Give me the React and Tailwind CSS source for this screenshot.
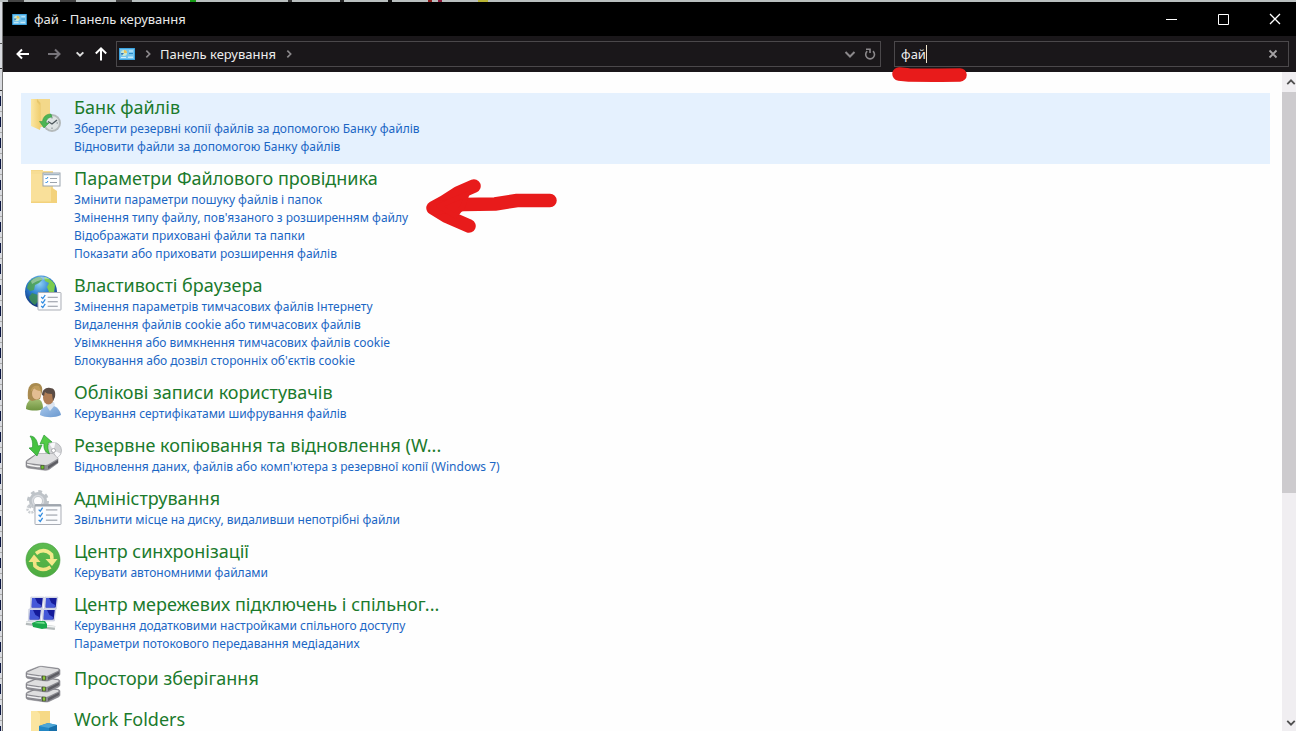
import { useId } from 'react';

function ControlPanelIcon({ className }) {
  return (
    <svg viewBox="0 0 16 12" className={className} aria-hidden="true">
      <rect width="16" height="12" fill="#2f9bdc" />
      <rect x="0.8" y="0.8" width="14.4" height="10.4" fill="#74c4ee" />
      <circle cx="5" cy="5" r="3" fill="#c9e8d0" />
      <path d="M5 5V2a3 3 0 0 1 3 3z" fill="#e8c35c" />
      <path d="M5 5H2a3 3 0 0 0 1 2.200z" fill="#2d72b8" />
      <rect x="10" y="2.500" width="4" height="1" fill="#d3effc" />
      <rect x="10" y="5" width="4" height="1" fill="#2e8ac8" />
      <rect x="2" y="9" width="5" height="1" fill="#d3effc" />
      <rect x="9" y="8.500" width="5" height="1.500" fill="#c4e8f8" />
    </svg>
  );
}

function IconFrame({ children }) {
  return (
    <svg viewBox="0 0 36 36" className="size-9 shrink-0 overflow-visible" aria-hidden="true">
      {children}
    </svg>
  );
}

function Checklist({ x, y, w, h, lines = 3 }) {
  const rows = Array.from({ length: lines }, (_, i) => y + (h * (i + 1)) / (lines + 0.9));
  return (
    <g>
      <rect x={x} y={y} width={w} height={h} fill="#fbfcfe" stroke="#a9adb5" strokeWidth="1" rx="0.6" />
      {rows.map((r) => (
        <g key={r}>
          <path d={`M${x + w * 0.14} ${r}l1.600 1.600 2.400-3.600`} fill="none" stroke="#2f8be0" strokeWidth="1.300" />
          <path d={`M${x + w * 0.42} ${r + 0.3}h${w * 0.44}`} stroke="#8e949e" strokeWidth="1" />
        </g>
      ))}
    </g>
  );
}

function FileHistoryIcon() {
  const id = useId();
  return (
    <IconFrame>
      <defs>
        <linearGradient id={id} x1="0" x2="1">
          <stop offset="0" stopColor="#fbe7a4" />
          <stop offset="1" stopColor="#f1cf70" />
        </linearGradient>
      </defs>
      <path d="M12 2h13v22l-3 6H12z" fill="#f3d88a" />
      <path d="M6 2h6l3 4v27L6 29z" fill={`url(#${id})`} />
      <path d="M12 2v3l3 3v24l0.500-1V6z" fill="#e8c66a" />
      <circle cx="27" cy="26" r="9" fill="#b4babb" />
      <circle cx="27" cy="26" r="7" fill="#dde3e3" />
      <path d="M27 20v1.500M27 30.500V32M21 26h1.500M31.500 26H33" stroke="#7c8588" strokeWidth="1" />
      <path d="M23 24.500l4 2.500 5-4" fill="none" stroke="#4d575b" strokeWidth="1.400" />
      <path d="M26 17c-5 0-8 3-8.500 7.500h-3L19 31l5-5h-3c0-3 2-5.500 6-6z" fill="#4cb455" stroke="#2f9540" strokeWidth="0.500" />
    </IconFrame>
  );
}

function ExplorerOptionsIcon() {
  return (
    <IconFrame>
      <path d="M6 2h12v4H6z" fill="#f4d788" />
      <path d="M6 3h22v19H6z" fill="#f7dd94" />
      <path d="M6 6h20v29H6z" fill="#f9e09a" />
      <path d="M26 19l6 4v12H6v-1.500h20z" fill="#f3d27c" />
      <rect x="18" y="5" width="17" height="13" fill="#fff" stroke="#9aa4ae" />
      <path d="M18.500 6.500h16" stroke="#9fb2c2" strokeWidth="1.500" />
      <path d="M20.500 10l1 1 1.500-2M20.500 14l1 1 1.500-2" fill="none" stroke="#2f8be0" strokeWidth="1" />
      <path d="M25 10.500h7M25 14.500h7" stroke="#9ba3ac" strokeWidth="1" />
    </IconFrame>
  );
}

function InternetIcon() {
  const id = useId();
  return (
    <IconFrame>
      <defs>
        <radialGradient id={id} cx="0.45" cy="0.25" r="0.8">
          <stop offset="0" stopColor="#8fd2f5" />
          <stop offset="0.45" stopColor="#2b7ed0" />
          <stop offset="1" stopColor="#0b2468" />
        </radialGradient>
      </defs>
      <circle cx="16" cy="16.500" r="16" fill={`url(#${id})`} />
      <path d="M3 9c3-5 7-7 12-7l3 2-4 4-4 2-1 5-4 1-3-3z" fill="#4fa24c" opacity="0.850" />
      <path d="M19 2c5 1 9 4 11 8l-1 8-5-1-2-5 2-4-4-2z" fill="#7ccc4e" />
      <path d="M7 18l6 2 1 5-4 5c-4-2-6-6-6-8z" fill="#3f8f52" opacity="0.850" />
      <path d="M6 6c5-5 13-6 19-2-6 0-12 1-18 5z" fill="#fff" opacity="0.350" />
      <Checklist x={13} y={17.5} w={23} h={17.5} />
    </IconFrame>
  );
}

function UsersIcon() {
  const id = useId();
  return (
    <IconFrame>
      <defs>
        <linearGradient id={`${id}g`} x1="0" y1="0" x2="0" y2="1">
          <stop offset="0" stopColor="#a9c277" />
          <stop offset="1" stopColor="#6f9440" />
        </linearGradient>
        <linearGradient id={`${id}b`} x1="0" y1="0" x2="1" y2="1">
          <stop offset="0" stopColor="#a9c9ec" />
          <stop offset="1" stopColor="#6a98cf" />
        </linearGradient>
      </defs>
      <path d="M1 27c0-6 3-10 9-11 6 1 8 4 8 11-5 2-12 2-17 0z" fill={`url(#${id}g)`} />
      <path d="M3 17C2 7 4 1 11 1c5 0 7 4 6 9l-2 7-8 2z" fill="#a98b50" />
      <ellipse cx="11.500" cy="11.500" rx="4.500" ry="6" fill="#e3bd92" />
      <path d="M6 9c0-4 4-6 8-5l2 5c-4 0-6-2-7-3-1 2-2 3-3 3z" fill="#bf9c5c" />
      <path d="M15 33c0-6 4-9 10-10 7 1 10 5 11 10-6 3-15 3-21 0z" fill={`url(#${id}b)`} />
      <path d="M21 23l4 6 5-6-1-3h-7z" fill="#dbe4f0" />
      <ellipse cx="23.500" cy="15.500" rx="5.500" ry="7" fill="#b07d55" />
      <path d="M17 13c0-5 4-8 8-7 4 0 6 3 5 9l-2 4-1-7c-4 0-6-1-7-2l-1 4z" fill="#5b4c45" />
    </IconFrame>
  );
}

function DriveShape({ y }) {
  return (
    <g>
      <path d={`M1 ${y + 7}q0-1.500 2-2.300L13 ${y + 0.8}q2-.8 4-.5l16 2q2 .4 2 2v3.700q0 1.200-1.500 2L24 ${y + 14.5}q-1.500.8-3.500.5L3 ${y + 12.5}q-2-.4-2-2z`} fill="#8b8b91" stroke="#77777c" strokeWidth="0.500" />
      <path d={`M2 ${y + 6.5}L14 ${y + 1.2}q1.500-.5 3-.3l16 2.300q1.500.6 0 1.500L23 ${y + 9.6}q-1.500.6-3 .3L3 ${y + 7.5}q-1.500-.3-1-1z`} fill="#dededf" />
      <path d={`M2 ${y + 9.3}q9 1.800 14 1.800`} fill="none" stroke="#f0f0f2" strokeWidth="1.600" />
      <path d={`M23 ${y + 11}L34 ${y + 5.5}v2.500l-11 6z`} fill="#5d5d63" />
      <rect x="17.500" y={y + 10} width="3" height="4" fill="#8dc63a" stroke="#33401f" strokeWidth="0.600" />
    </g>
  );
}

function BackupIcon() {
  return (
    <IconFrame>
      <circle cx="28.500" cy="15.500" r="8" fill="#d3d4d7" stroke="#a4a6aa" strokeWidth="0.700" />
      <path d="M28.500 15.500l-4-6.500a8 8 0 0 1 6-1.500zM28.500 15.500l7 3a8 8 0 0 1-4 4.500z" fill="#f8f8fa" />
      <circle cx="28.500" cy="15.500" r="2" fill="#fff" stroke="#8f9195" strokeWidth="0.700" />
      <path d="M1 27q0-1.500 2-2.500l9-6h16l5 5v4.500L24 34.500q-2 1-4 .8L3 33q-2-.4-2-2z" fill="#8d8d92" stroke="#77777c" strokeWidth="0.500" />
      <path d="M2 26.500L13 18.500h15l5 5-10 6q-1.500.6-3 .4L3 28q-1.500-.4-1-1.500z" fill="#dfdfe1" />
      <path d="M2 29.500q8 2 13 2" fill="none" stroke="#f3f3f3" strokeWidth="1.500" />
      <path d="M23 31l10-6v2.500L23 34z" fill="#5d5d63" />
      <rect x="16" y="30.500" width="3" height="3.500" fill="#6fc02e" stroke="#33401f" strokeWidth="0.500" />
      <path d="M5 1c4 0 7 3 8 10l4-1-5 11-8-8 3.500-.5C8 7 7 4 5 1z" fill="#45c240" stroke="#1f8f2c" strokeWidth="0.600" />
      <path d="M19 0l8 7-3.500.5c-1 4-1 7 1 11.500-5-2-6-6-5.500-10.500L15 9z" fill="#52cb46" stroke="#1f8f2c" strokeWidth="0.600" />
    </IconFrame>
  );
}

function AdminIcon() {
  return (
    <IconFrame>
      <circle cx="13" cy="13" r="6.500" fill="none" stroke="#bec3c8" strokeWidth="5" />
      <circle cx="13" cy="13" r="9.500" fill="none" stroke="#bec3c8" strokeWidth="3" strokeDasharray="3.700 3.760" />
      <circle cx="13" cy="13" r="5.500" fill="none" stroke="#d7dade" strokeWidth="1.500" />
      <circle cx="6" cy="21" r="3.500" fill="none" stroke="#cbcfd3" strokeWidth="2.500" strokeDasharray="2 1" />
      <Checklist x={10} y={16.5} w={26} h={20} />
      <path d="M10 17.500h26" stroke="#9fa6ae" strokeWidth="2" />
    </IconFrame>
  );
}

function SyncIcon() {
  const id = useId();
  return (
    <IconFrame>
      <defs>
        <linearGradient id={id} x1="0" y1="0" x2="0" y2="1">
          <stop offset="0" stopColor="#5dbb50" />
          <stop offset="1" stopColor="#4dab40" />
        </linearGradient>
      </defs>
      <circle cx="18" cy="19" r="17" fill={`url(#${id})`} stroke="#3f9b37" strokeWidth="0.600" />
      <path d="M11 12.500Q19 6.500 26.500 13.500L27 18" fill="none" stroke="#f3ea8c" strokeWidth="3.600" />
      <path d="M20.500 18h12L27 25z" fill="#f3ea8c" />
      <path d="M25.500 26Q17 31.500 10 25L9.500 20" fill="none" stroke="#f3e384" strokeWidth="3.600" />
      <path d="M3.500 21h12L9 13.500z" fill="#f3e384" />
    </IconFrame>
  );
}

function Monitor({ x, y }) {
  return (
    <g>
      <path d={`M${x + 0.8} ${y}h13l-1.500 12h-12z`} fill="#dde1ee" stroke="#b4bbd2" strokeWidth="0.500" />
      <path d={`M${x + 2} ${y + 1}h10.800l-1.200 9.500h-10z`} fill="#151b9a" />
      <path d={`M${x + 2} ${y + 1}h3l2.500 5 3.500 2-0.300 2.500h-9z`} fill="#4458d8" />
    </g>
  );
}

function NetworkIcon() {
  return (
    <IconFrame>
      <Monitor x={5} y={3} />
      <Monitor x={19} y={3} />
      <Monitor x={3} y={15} />
      <Monitor x={17} y={15} />
      <path d="M1 29l8 1 12 3 9 1" fill="none" stroke="#b4babb" strokeWidth="4" />
      <path d="M1 28l8 1 12 3 9 1" fill="none" stroke="#eff2f2" strokeWidth="1.500" />
      <path d="M7 29l5-2h8l2 3v4l-5 1-9-2z" fill="#19a84b" />
      <path d="M9 29l4-1h6l1 2z" fill="#6fdc8c" />
    </IconFrame>
  );
}

function StorageIcon() {
  return (
    <IconFrame>
      <DriveShape y={22} />
      <DriveShape y={12} />
      <DriveShape y={1} />
    </IconFrame>
  );
}

function WorkFoldersIcon() {
  return (
    <IconFrame>
      <path d="M6 5h19v31H6z" fill="#f6d986" />
      <path d="M6 5h6l3 3v28H6z" fill="#fbe5a0" />
      <path d="M14 20l9-3 9 2v17H14z" fill="#2387c4" />
      <path d="M14 20l9-3 9 2-8 3z" fill="#4da6d6" />
      <path d="M24 22l8-3v17h-8z" fill="#176fa9" />
    </IconFrame>
  );
}

const items = [
  {
    title: 'Банк файлів',
    Icon: FileHistoryIcon,
    active: true,
    links: ['Зберегти резервні копії файлів за допомогою Банку файлів', 'Відновити файли за допомогою Банку файлів'],
  },
  {
    title: 'Параметри Файлового провідника',
    Icon: ExplorerOptionsIcon,
    links: [
      'Змінити параметри пошуку файлів і папок',
      "Змінення типу файлу, пов'язаного з розширенням файлу",
      'Відображати приховані файли та папки',
      'Показати або приховати розширення файлів',
    ],
  },
  {
    title: 'Властивості браузера',
    Icon: InternetIcon,
    links: [
      'Змінення параметрів тимчасових файлів Інтернету',
      'Видалення файлів cookie або тимчасових файлів',
      'Увімкнення або вимкнення тимчасових файлів cookie',
      "Блокування або дозвіл сторонніх об'єктів cookie",
    ],
  },
  { title: 'Облікові записи користувачів', Icon: UsersIcon, links: ['Керування сертифікатами шифрування файлів'] },
  {
    title: 'Резервне копіювання та відновлення (W...',
    Icon: BackupIcon,
    links: ["Відновлення даних, файлів або комп'ютера з резервної копії (Windows 7)"],
  },
  { title: 'Адміністрування', Icon: AdminIcon, links: ['Звільнити місце на диску, видаливши непотрібні файли'] },
  { title: 'Центр синхронізації', Icon: SyncIcon, links: ['Керувати автономними файлами'] },
  {
    title: 'Центр мережевих підключень і спільног...',
    Icon: NetworkIcon,
    links: ['Керування додатковими настройками спільного доступу', 'Параметри потокового передавання медіаданих'],
  },
  { title: 'Простори зберігання', Icon: StorageIcon, links: [] },
  { title: 'Work Folders', Icon: WorkFoldersIcon, links: [] },
];

function ResultItem({ title, Icon, links, active }) {
  return (
    <li className={`flex gap-[13px] px-1 ${active ? 'bg-[#e5f1fe]' : ''}`}>
      <div className="pt-1 pb-px">
        <Icon />
      </div>
      <div className={links.length ? 'min-w-0 pt-0.5 pb-2' : 'min-w-0 pt-[5px]'}>
        <h2 className="text-[18px] leading-6 whitespace-nowrap text-[#1b7a2c]">
          <a href="#open">{title}</a>
        </h2>
        {links.length > 0 && (
          <ul className="pt-px">
            {links.map((l) => (
              <li key={l} className="text-[12px] leading-[18px] whitespace-nowrap text-[#1b66c4]">
                <a href="#task">{l}</a>
              </li>
            ))}
          </ul>
        )}
      </div>
    </li>
  );
}

function Chevron({ d, className, width = 1.6 }) {
  return (
    <svg viewBox="0 0 12 12" className={className} fill="none" stroke="currentColor" strokeWidth={width} aria-hidden="true">
      <path d={d} />
    </svg>
  );
}

function BackgroundTop() {
  return (
    <div className="flex h-0.5 shrink-0 bg-[#b9bfbf]" aria-hidden="true">
      <div className="ml-2 w-4 bg-[#444]" />
      <div className="ml-9 w-4 bg-[#444]" />
      <div className="ml-10 w-4 bg-[#444]" />
      <div className="ml-[58px] w-1.5 bg-[#149a14]" />
      <div className="ml-[92px] w-1 bg-[#333]" />
      <div className="ml-12 w-1 bg-[#222]" />
      <div className="ml-11 w-1 bg-[#111]" />
      <div className="ml-9 w-1 bg-[#8b1a1a]" />
      <div className="ml-1.5 w-1 bg-[#8b1a3a]" />
      <div className="ml-9 w-2.5 bg-[#b9b433]" />
    </div>
  );
}

function BackgroundLeft() {
  return (
    <div className="flex w-[3px] shrink-0 flex-col overflow-hidden border-r border-[#777] bg-[#d9dbe0]" aria-hidden="true">
      <div className="h-[42px] shrink-0 border-b border-[#555]" />
      <div className="h-[25px] shrink-0 border-b border-[#333]" />
      <div className="h-[22px] shrink-0 border-b border-[#333]" />
      {Array.from({ length: 32 }, (_, i) => (
        <div key={i} className="flex h-[21px] shrink-0 items-center border-b border-[#aaa]">
          <div className="h-2.5 w-px bg-[#0a1440]" />
        </div>
      ))}
    </div>
  );
}

export default function App() {
  return (
    <div className="relative flex h-screen flex-col overflow-hidden bg-[#b9bfbf] font-['Noto_Sans','Open_Sans',sans-serif]">
      <BackgroundTop />
      <div className="flex min-h-0 flex-1">
        <BackgroundLeft />
        <div className="flex min-w-0 flex-1 flex-col bg-[#fefefe]">
          <header className="flex h-[34px] shrink-0 items-center bg-black pl-[9px] text-[#e8e8e8]">
            <ControlPanelIcon className="h-[11px] w-[15px]" />
            <h1 className="ml-[7px] text-[13px] leading-5">фай - Панель керування</h1>
            <div className="ml-auto flex">
              <button aria-label="Згорнути" className="flex h-8 w-[52px] items-center justify-center">
                <svg viewBox="0 0 11 11" className="size-[11px]" stroke="#fff" aria-hidden="true"><path d="M0 5.500h11" /></svg>
              </button>
              <button aria-label="Розгорнути" className="flex h-8 w-[52px] items-center justify-center">
                <svg viewBox="0 0 11 11" className="size-[11px]" fill="none" stroke="#fff" aria-hidden="true"><path d="M.5.500h10v10H.5z" /></svg>
              </button>
              <button aria-label="Закрити" className="flex h-8 w-[47px] items-center justify-center pl-1">
                <svg viewBox="0 0 12 12" className="size-3" stroke="#fff" strokeWidth="1.300" aria-hidden="true"><path d="M1 1l10 10M11 1L1 11" /></svg>
              </button>
            </div>
          </header>

          <nav className="flex h-9 shrink-0 items-center bg-[#1a171a] pr-[7px] pl-3 text-[#ededed]">
            <button aria-label="Назад" className="text-white">
              <svg viewBox="0 0 16 16" className="size-4" fill="none" stroke="currentColor" strokeWidth="2" aria-hidden="true"><path d="M14 8H2.500M7 3.500L2.500 8 7 12.500" /></svg>
            </button>
            <button aria-label="Уперед" className="ml-[15px] text-[#77747a]">
              <svg viewBox="0 0 16 16" className="size-4" fill="none" stroke="currentColor" strokeWidth="2" aria-hidden="true"><path d="M2 8h11.500M9 3.500L13.500 8 9 12.500" /></svg>
            </button>
            <button aria-label="Останні розташування" className="ml-[13px] text-[#dcdcdc]">
              <Chevron className="size-2.5" d="M2 4l4 4 4-4" width={2.4} />
            </button>
            <button aria-label="Угору" className="ml-2 text-white">
              <svg viewBox="0 0 16 16" className="size-4" fill="none" stroke="currentColor" strokeWidth="2" aria-hidden="true"><path d="M8 14.500V2.500M2.800 7.500L8 2.300l5.200 5.200" /></svg>
            </button>

            <div className="ml-[7px] flex h-[26px] min-w-0 flex-[769] items-center border border-[#4b484b] pl-0.5">
              <ControlPanelIcon className="h-3 w-4" />
              <Chevron className="ml-2 size-2.5 text-[#8b888b]" d="M4 2l4 4-4 4" width={2} />
              <a href="#control-panel" className="ml-[7px] text-[13px] leading-5">Панель керування</a>
              <Chevron className="ml-2 size-2.5 text-[#8b888b]" d="M4 2l4 4-4 4" width={2} />
              <button aria-label="Попередні розташування" className="ml-auto text-[#8b888b]">
                <Chevron className="size-3" d="M1.500 4L6 8.500 10.500 4" width={2} />
              </button>
              <button aria-label="Оновити" className="mr-1 ml-2 text-[#8b888b]">
                <svg viewBox="0 0 12 12" className="size-3" fill="none" stroke="currentColor" strokeWidth="1.600" aria-hidden="true">
                  <path d="M9 3.200A4.400 4.400 0 1 1 3.200 3.200" />
                  <path d="M2 1.300h4V5" />
                </svg>
              </button>
            </div>

            <div className="ml-[13px] flex h-[26px] min-w-0 flex-[391] items-center border border-[#4b484b] pl-[6px]">
              <input
                type="text"
                aria-label="Пошук"
                defaultValue="фай"
                className="field-sizing-content bg-transparent p-0 text-[13px] leading-5 caret-transparent outline-none"
              />
              <span className="h-[18px] w-px bg-[#f0e6d0]" />
              <button aria-label="Очистити пошук" className="mr-2.5 ml-auto text-[#a5a2a5]">
                <svg viewBox="0 0 10 10" className="size-2.5" stroke="currentColor" strokeWidth="1.800" aria-hidden="true"><path d="M1.500 1.500l7 7M8.500 1.500l-7 7" /></svg>
              </button>
            </div>
          </nav>

          <div className="flex min-h-0 flex-1">
            <main className="min-w-0 flex-1 overflow-hidden pt-[21px] pr-3 pl-[18px]">
              <ul>
                {items.map((item) => (
                  <ResultItem key={item.title} {...item} />
                ))}
              </ul>
            </main>
            <div className="flex w-3.5 shrink-0 flex-col bg-[#f0eef1] text-[#505050]">
              <button aria-label="Прокрутити вгору" className="flex h-5 items-center justify-end">
                <Chevron className="size-2.5" d="M1.500 8.500L6 4l4.500 4.500" width={2.2} />
              </button>
              <div className="flex min-h-0 flex-1 flex-col">
                <div className="flex-[401] bg-[#cdcbce]" />
                <div className="flex-[222]" />
              </div>
              <button aria-label="Прокрутити вниз" className="flex h-4 items-center justify-end">
                <Chevron className="size-2.5" d="M1.500 3.500L6 8l4.500-4.500" width={2.2} />
              </button>
            </div>
          </div>
        </div>
      </div>

      <svg viewBox="0 0 76 16" className="pointer-events-none absolute top-[66px] left-[891px] h-4 w-[76px]" fill="none" stroke="#e81b1b" strokeWidth="13.500" strokeLinecap="round" strokeLinejoin="round" aria-hidden="true">
        <path d="M8 8l10 1 30 .3 21-.4" />
      </svg>
      <svg viewBox="0 0 132 58" className="pointer-events-none absolute top-[177px] left-[425px] h-[58px] w-[132px]" fill="none" stroke="#e81b1b" strokeWidth="13.500" strokeLinecap="round" strokeLinejoin="round" aria-hidden="true">
        <path d="M49 9L33 16 19 25 8 31l13 8 23 10" />
        <path d="M10 31l28-3.500 32-.5 22-3.500h33" />
        <path d="M14 29L42 17l-4 12-8 10z" fill="#e81b1b" strokeWidth="5" />
      </svg>
    </div>
  );
}
